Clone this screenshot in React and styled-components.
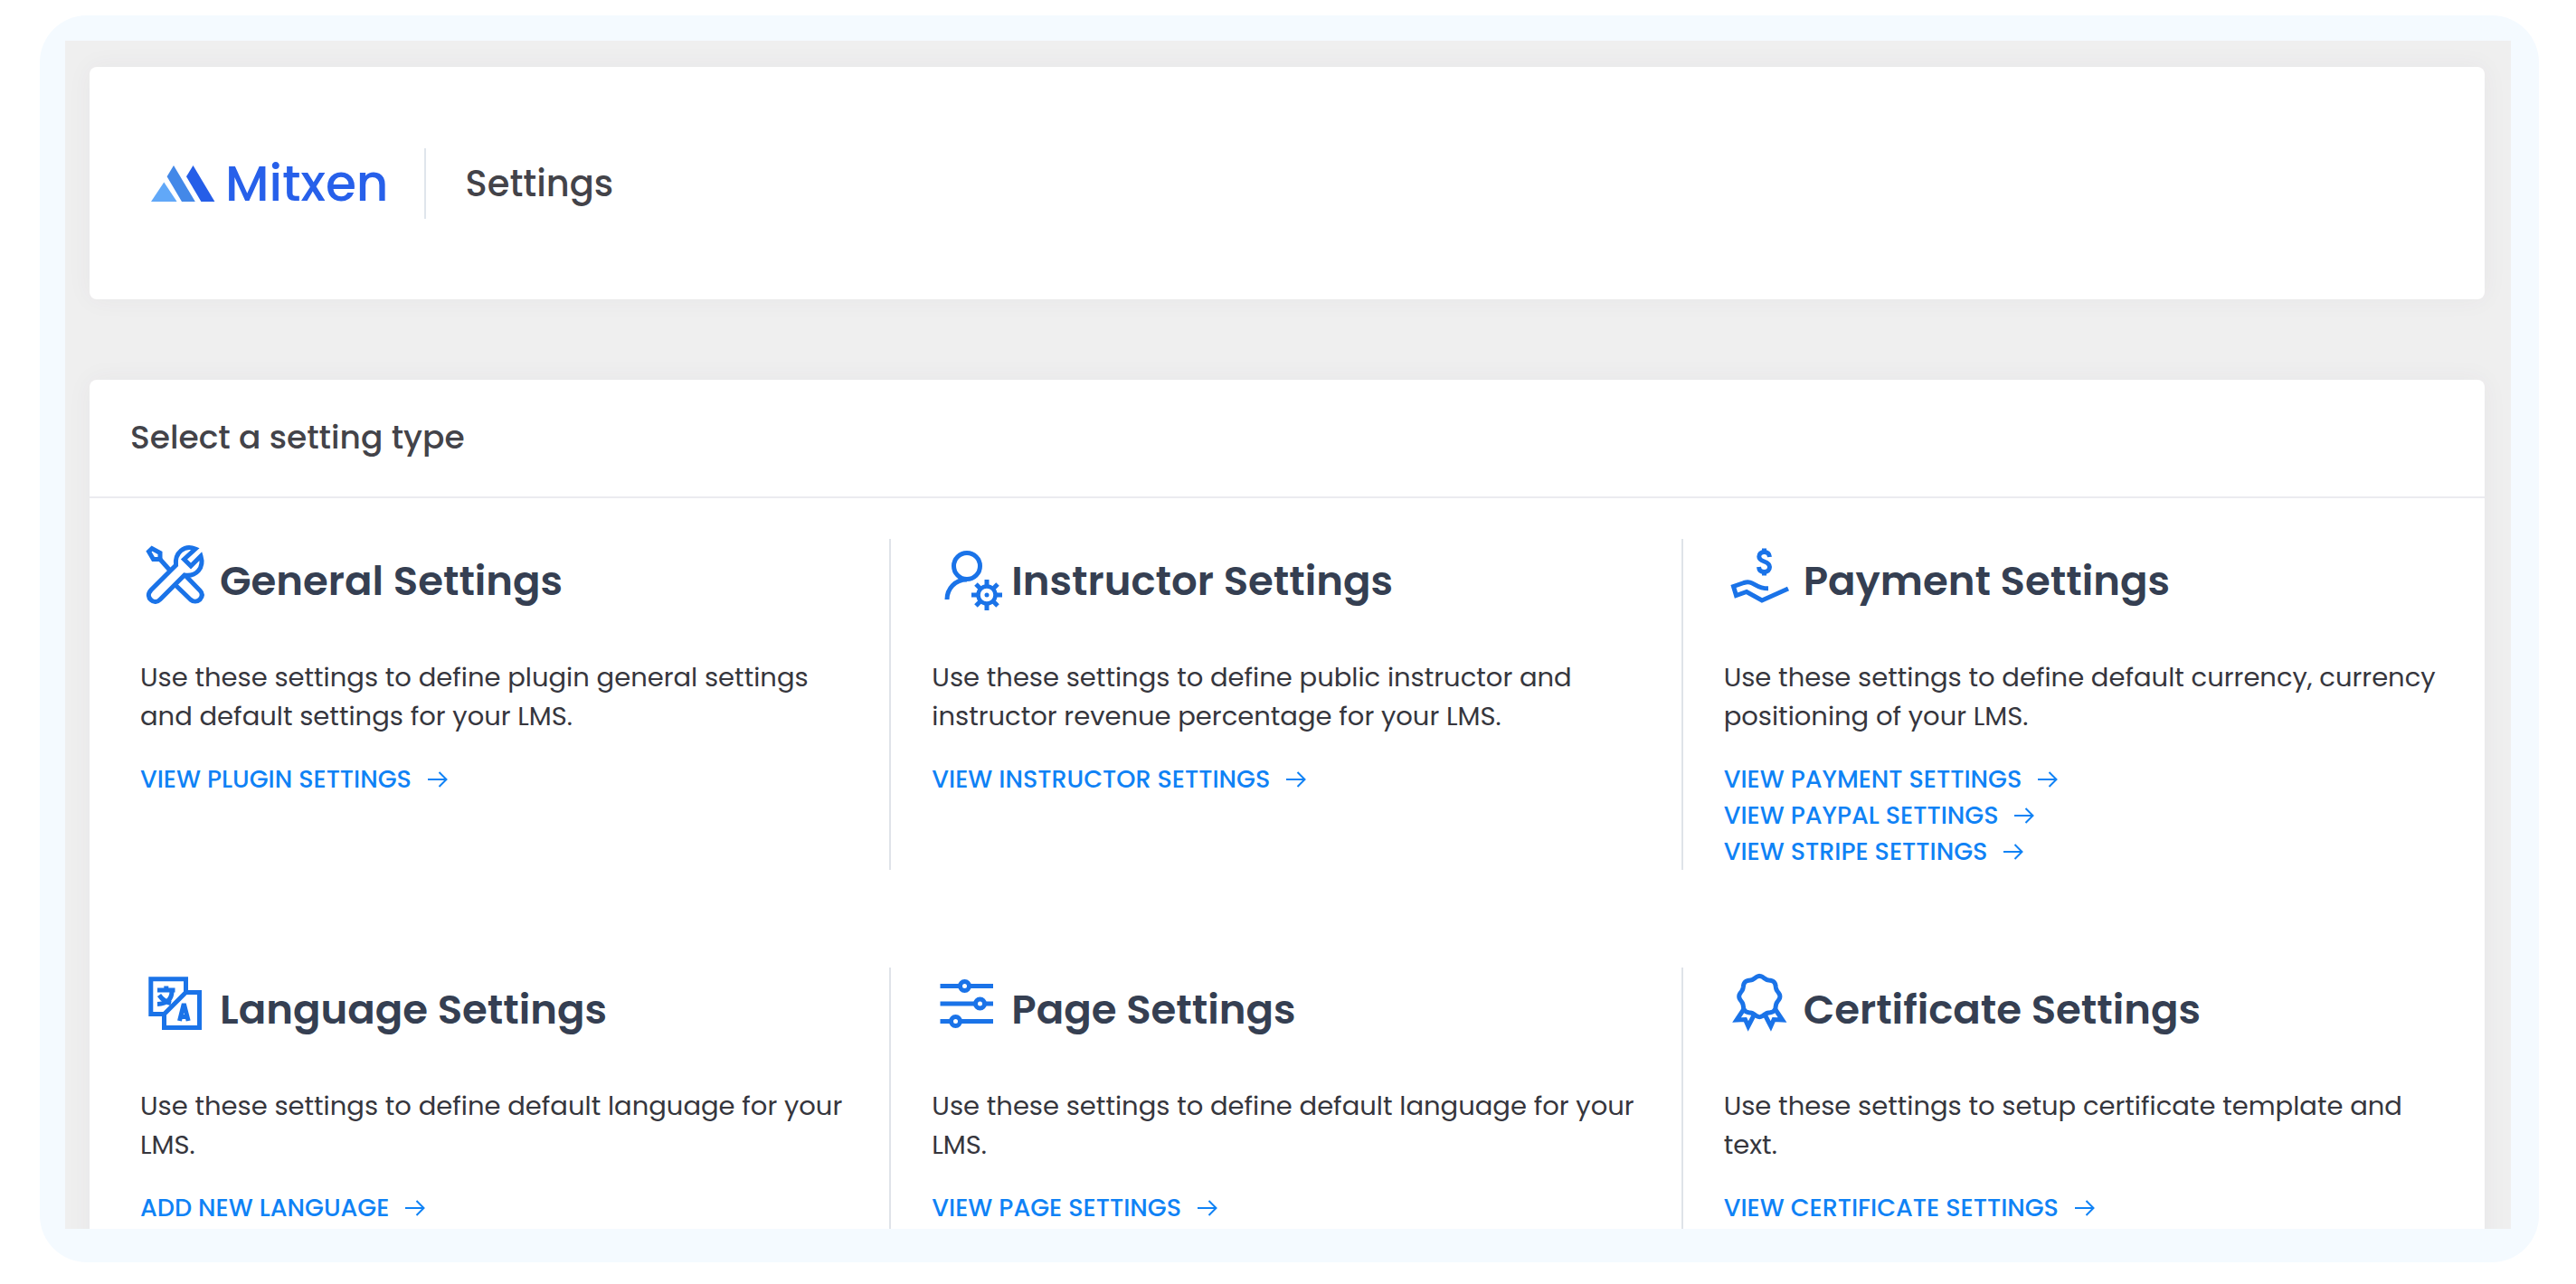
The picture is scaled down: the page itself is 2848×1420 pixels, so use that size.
import React from "react";
import styled, { createGlobalStyle } from "styled-components";

const GlobalStyle = createGlobalStyle`
  *, *::before, *::after { box-sizing: border-box; }
  body {
    margin: 0;
    background: #ffffff;
    font-family: Poppins, Inter, "Noto Sans", sans-serif;
    color: #36363d;
  }
  h1, h2, h3, p, ul { margin: 0; padding: 0; }
`;

const Page = styled.div`
  height: 100vh;
  padding: 17px 41px 24px 44px;
`;

const Frame = styled.div`
  height: 100%;
  padding: 28px 31px 37px 28px;
  border-radius: 52px;
  background: #f4faff;
`;

const Screen = styled.main`
  height: 100%;
  padding: 29px 29px 0 27px;
  overflow: hidden;
  background: #efefef;
`;

const Card = styled.section`
  border-radius: 8px;
  background: #ffffff;
  box-shadow: 0 0 28px rgba(82, 63, 105, 0.05);
`;

const Banner = styled(Card)`
  display: flex;
  align-items: center;
  min-height: 257px;
  padding: 0 68px;
  margin-bottom: 89px;
`;

const Brand = styled.div`
  display: flex;
  align-items: center;
  gap: 11px;
  padding-right: 39px;
  color: #2760ea;
  font-size: 55px;
  line-height: 78px;
  font-weight: 500;
  border-right: 2px solid #dfe5ec;
`;

const BrandMark = styled.svg`
  width: 71px;
  height: 40px;
`;

const PageTitle = styled.h1`
  padding-left: 44px;
  color: #434349;
  font-size: 40px;
  line-height: 60px;
  font-weight: 500;
`;

const CardHeader = styled.header`
  padding: 35px 45px 37px;
  border-bottom: 2px solid #ebebf0;
`;

const CardTitle = styled.h2`
  color: #434349;
  font-size: 36px;
  line-height: 57px;
  font-weight: 500;
`;

const Grid = styled.div`
  display: grid;
  grid-template-columns: repeat(3, 1fr);
  grid-auto-rows: 1fr;
  row-gap: 108px;
  padding: 45px 11px;
`;

const Cell = styled.article`
  min-width: 0;
  padding: 0 36px 0 45px;

  &:not(:nth-child(3n)) {
    border-right: 2px solid #dfe3e9;
  }
`;

const CellHead = styled.div`
  display: flex;
  align-items: flex-end;
  gap: 12px;
  margin-bottom: 56px;
`;

const Icon = styled.svg`
  flex: none;
  width: 76px;
  height: 76px;
  fill: none;
  stroke: #1a73e8;
  stroke-width: 5;
`;

const CellTitle = styled.h3`
  color: #353f52;
  font-size: 45px;
  line-height: 58px;
  font-weight: 600;
`;

const CellText = styled.p`
  margin-bottom: 28px;
  font-size: 29px;
  line-height: 43px;
`;

const Links = styled.ul`
  list-style: none;
`;

const LinkItem = styled.li`
  display: flex;
`;

const SettingLink = styled.a`
  display: inline-flex;
  align-items: center;
  gap: 18px;
  color: #0f82f5;
  font-size: 27px;
  line-height: 40px;
  font-weight: 500;
  text-decoration: none;
  text-transform: uppercase;
`;

const Arrow = styled.svg`
  width: 22px;
  height: 18px;
  fill: none;
  stroke: currentColor;
  stroke-width: 2;
`;

const ToolsIcon = () => (
  <Icon viewBox="0 0 76 76" aria-hidden="true">
    <path d="M9.500 14 L13 10.500 L22 15.500 V22.500 H14.500 Z" />
    <path d="M21.500 22 L34 36" />
    <path d="M61 11 C49 6 38 15 39.500 29 L12 56.500 C8 61 9 65 12 67.500 C15 70.500 19 70 22 67 L49 40 C62 42 71 32 67 19 L56 30 L48.500 22.500 Z" />
    <path d="M39.500 51.500 L55.500 67 C59 70 63 69.500 66 67 C69 63.500 69 60 66 57 L50.500 41" />
  </Icon>
);

const TEETH = [0, 45, 90, 135, 180, 225, 270, 315];

const InstructorIcon = () => (
  <Icon viewBox="0 0 76 76" overflow="visible" aria-hidden="true">
    <circle cx="39" cy="30" r="14.500" />
    <path d="M17 67 C17 55 26 45 39 45" />
    <circle cx="61" cy="62" r="9.500" strokeWidth="4.500" />
    <circle cx="61" cy="62" r="2.500" fill="#1a73e8" stroke="none" />
    {TEETH.map((a) => (
      <path key={a} d="M61 52 V45" transform={`rotate(${a} 61 62)`} />
    ))}
  </Icon>
);

const PaymentIcon = () => (
  <Icon viewBox="0 0 76 76" aria-hidden="true">
    <path d="M50.500 20 C50 15.500 47 14.500 44.500 14.500 C41 14.500 38.800 16.500 38.800 19.500 C38.800 26.500 50.500 23.500 50.500 31 C50.500 34.500 48 36.500 44.500 36.500 C41 36.500 38.800 34.500 38.500 31" />
    <path d="M44.500 10.500 V15 M44.500 36 V40.500" />
    <path d="M71 55 L42 68 L25 58.500 L13.500 62.500 L10.500 52.500 L22 48.500 C33 45 34 55 49 54.800" />
  </Icon>
);

const LanguageIcon = () => (
  <Icon viewBox="0 0 76 76" aria-hidden="true">
    <path d="M27 51.500 H11.800 V12.800 H50.500 V28" />
    <path d="M50.500 27.500 H65.500 V66.500 H26.500 V51.500 Z" />
    <path d="M19 25 H38.500 M28.800 20.500 V25 M35 26 C35 36 29 40 19 40.500 M21 30.500 C24 35 28 38 34 39.500" />
    <path d="M43.500 59 L48.300 40 L53.200 59 M45 54.500 H52" />
  </Icon>
);

const SlidersIcon = () => (
  <Icon viewBox="0 0 76 76" aria-hidden="true">
    <path d="M9.500 20.500 H31 M42 20.500 H68 M9.500 40 H48 M59 40 H68 M9.500 59.500 H21 M32 59.500 H68" />
    <circle cx="36.500" cy="20.500" r="5" />
    <circle cx="53.500" cy="40" r="5" />
    <circle cx="26.500" cy="59.500" r="5" />
  </Icon>
);

const rosette = Array.from({ length: 96 }, (_, i) => {
  const t = (i / 96) * Math.PI * 2;
  const r = 21.4 + 1.2 * Math.cos(8 * t);
  return `${(39.3 + r * Math.sin(t)).toFixed(2)},${(32 - r * Math.cos(t)).toFixed(2)}`;
}).join(" ");

const CertificateIcon = () => (
  <Icon viewBox="0 0 76 76" aria-hidden="true">
    <polygon points={rosette} />
    <path d="M22 46 L14 58 L23.500 57.500 L26.800 65 L34 51" />
    <path d="M56.600 46 L64.600 58 L55.100 57.500 L51.800 65 L44.600 51" />
  </Icon>
);

const SETTINGS = [
  {
    title: "General Settings",
    icon: ToolsIcon,
    text: "Use these settings to define plugin general settings and default settings for your LMS.",
    links: ["View plugin settings"],
  },
  {
    title: "Instructor Settings",
    icon: InstructorIcon,
    text: "Use these settings to define public instructor and instructor revenue percentage for your LMS.",
    links: ["View instructor settings"],
  },
  {
    title: "Payment Settings",
    icon: PaymentIcon,
    text: "Use these settings to define default currency, currency positioning of your LMS.",
    links: ["View payment settings", "View paypal settings", "View stripe settings"],
  },
  {
    title: "Language Settings",
    icon: LanguageIcon,
    text: "Use these settings to define default language for your LMS.",
    links: ["Add new language"],
  },
  {
    title: "Page Settings",
    icon: SlidersIcon,
    text: "Use these settings to define default language for your LMS.",
    links: ["View page settings"],
  },
  {
    title: "Certificate Settings",
    icon: CertificateIcon,
    text: "Use these settings to setup certificate template and text.",
    links: ["View certificate settings"],
  },
];

function SettingCell({ title, icon: Glyph, text, links }) {
  return (
    <Cell>
      <CellHead>
        <Glyph />
        <CellTitle>{title}</CellTitle>
      </CellHead>
      <CellText>{text}</CellText>
      <Links>
        {links.map((label) => (
          <LinkItem key={label}>
            <SettingLink href="#">
              {label}
              <Arrow viewBox="0 0 22 18" aria-hidden="true">
                <path d="M0 9 H21 M12.500 1 L20.500 9 L12.500 17" />
              </Arrow>
            </SettingLink>
          </LinkItem>
        ))}
      </Links>
    </Cell>
  );
}

export default function App() {
  return (
    <>
      <GlobalStyle />
      <Page>
        <Frame>
          <Screen>
            <Banner>
              <Brand>
                <BrandMark viewBox="0 0 71 40" aria-hidden="true">
                  <path d="M0 40 L14.300 18.500 L28.600 40 Z" fill="#61a8f8" />
                  <path d="M25 0 L17.600 12.300 L34 40 H48.800 Z" fill="#4388e8" />
                  <path d="M46.500 0 L39 12.300 L55.400 40 H70.400 Z" fill="#255ee8" />
                </BrandMark>
                Mitxen
              </Brand>
              <PageTitle>Settings</PageTitle>
            </Banner>
            <Card>
              <CardHeader>
                <CardTitle>Select a setting type</CardTitle>
              </CardHeader>
              <Grid>
                {SETTINGS.map((item) => (
                  <SettingCell key={item.title} {...item} />
                ))}
              </Grid>
            </Card>
          </Screen>
        </Frame>
      </Page>
    </>
  );
}
